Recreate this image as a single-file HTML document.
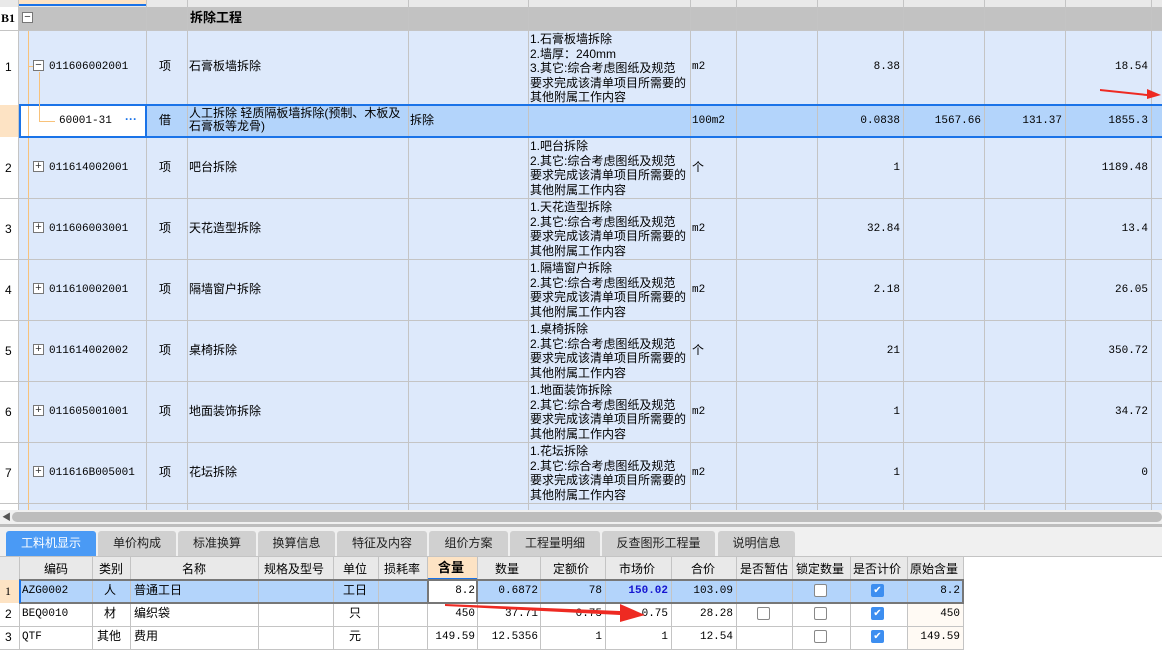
<!DOCTYPE html>
<html><head><meta charset="utf-8"><style>
*{margin:0;padding:0;box-sizing:border-box}
body{width:1162px;height:651px;overflow:hidden;background:#fff;font-family:"Liberation Sans","Noto Sans CJK SC",sans-serif;font-size:12px;color:#000;position:relative}
.a{position:absolute}
.c{position:absolute;white-space:nowrap;line-height:14px}
.m{font-family:"Liberation Mono","Noto Sans CJK SC",monospace;font-size:11px}
.vl{position:absolute;width:1px;background:#c4c4c4}
.hl{position:absolute;height:1px;background:#c4c4c4}
.box{position:absolute;width:11px;height:11px;border:1px solid #777;background:#fff;font-size:11px;line-height:8px;text-align:center;color:#333}
.tab{position:absolute;top:531px;height:25px;background:#d0d0d0;border-radius:3px 3px 0 0;text-align:center;line-height:25px;font-size:12px;color:#222}
.cb{position:absolute;width:13px;height:13px;border:1px solid #888;border-radius:2px;background:#fff}
.ck{position:absolute;width:13px;height:13px;border-radius:2px;background:#3d8ef0;color:#fff;font-size:10px;line-height:13px;text-align:center}
</style></head><body>
<div class="a" style="left:0;top:0;width:1162px;height:7px;background:#e9e9e9"></div>
<div class="a" style="left:19px;top:0;width:127px;height:6px;background:#fde3c4;border-bottom:2px solid #1a73e8"></div>
<div class="a" style="left:0;top:7px;width:1162px;height:23px;background:#c2c2c2"></div>
<div class="a" style="left:0;top:7px;width:18px;height:23px;background:#fff"></div>
<div class="c" style="left:1px;top:11px;font-weight:bold;font-family:'Liberation Serif',serif">B1</div>
<div class="box" style="left:22px;top:12px">−</div>
<div class="c" style="left:190px;top:11px;font-weight:bold;font-size:13px">拆除工程</div>
<div class="a" style="left:19px;top:30px;width:1143px;height:480px;background:#dde9fb"></div>
<div class="a" style="left:0;top:30px;width:18px;height:480px;background:#fff"></div>
<div class="a" style="left:0;top:105px;width:19px;height:32px;background:#fde3c4"></div>
<div class="a" style="left:19px;top:105px;width:1143px;height:32px;background:#b3d4fb"></div>
<div class="a" style="left:19px;top:105px;width:127px;height:32px;background:#fff"></div>
<div class="vl" style="left:18px;top:0;height:510px"></div>
<div class="vl" style="left:146px;top:0;height:510px"></div>
<div class="vl" style="left:187px;top:0;height:510px"></div>
<div class="vl" style="left:408px;top:0;height:510px"></div>
<div class="vl" style="left:528px;top:0;height:510px"></div>
<div class="vl" style="left:690px;top:0;height:510px"></div>
<div class="vl" style="left:736px;top:0;height:510px"></div>
<div class="vl" style="left:817px;top:0;height:510px"></div>
<div class="vl" style="left:903px;top:0;height:510px"></div>
<div class="vl" style="left:984px;top:0;height:510px"></div>
<div class="vl" style="left:1065px;top:0;height:510px"></div>
<div class="vl" style="left:1151px;top:0;height:510px"></div>
<div class="a" style="left:28px;top:30px;width:1px;height:480px;background:#f8c27a"></div>
<div class="hl" style="left:0;top:30px;width:1162px"></div>
<div class="hl" style="left:0;top:198px;width:1162px"></div>
<div class="hl" style="left:0;top:259px;width:1162px"></div>
<div class="hl" style="left:0;top:320px;width:1162px"></div>
<div class="hl" style="left:0;top:381px;width:1162px"></div>
<div class="hl" style="left:0;top:442px;width:1162px"></div>
<div class="hl" style="left:0;top:503px;width:1162px"></div>
<div class="a" style="left:19px;top:104px;width:1143px;height:34px;border:2px solid #1a73e8;border-right:none"></div>
<div class="a" style="left:145px;top:104px;width:2px;height:34px;background:#1a73e8"></div>
<div class="c" style="left:5px;top:60px">1</div>
<div class="a" style="left:29px;top:66px;width:6px;height:1px;background:#f8c27a"></div>
<div class="box" style="left:33px;top:60px">−</div>
<div class="c m" style="left:49px;top:60px">011606002001</div>
<div class="c" style="left:159px;top:59px">项</div>
<div class="c" style="left:189px;top:59px">石膏板墙拆除</div>
<div class="c" style="left:530px;top:32px;line-height:14.5px">1.石膏板墙拆除<br>2.墙厚：240mm<br>3.其它:综合考虑图纸及规范<br>要求完成该清单项目所需要的<br>其他附属工作内容</div>
<div class="c m" style="left:692px;top:60px">m2</div>
<div class="c m" style="left:850px;top:60px;width:50px;text-align:right">8.38</div>
<div class="c m" style="left:1090px;top:60px;width:58px;text-align:right">18.54</div>
<div class="a" style="left:39px;top:72px;width:1px;height:50px;background:#f8c27a"></div>
<div class="a" style="left:39px;top:121px;width:16px;height:1px;background:#f8c27a"></div>
<div class="c m" style="left:59px;top:114px">60001-31</div>
<div class="c" style="left:125px;top:112px;color:#1a73e8;font-weight:bold">···</div>
<div class="c" style="left:159px;top:113px">借</div>
<div class="c" style="left:189px;top:107px;line-height:13px">人工拆除 轻质隔板墙拆除(预制、木板及<br>石膏板等龙骨)</div>
<div class="c" style="left:410px;top:113px">拆除</div>
<div class="c m" style="left:692px;top:114px">100m2</div>
<div class="c m" style="left:840px;top:114px;width:60px;text-align:right">0.0838</div>
<div class="c m" style="left:920px;top:114px;width:61px;text-align:right">1567.66</div>
<div class="c m" style="left:1000px;top:114px;width:62px;text-align:right">131.37</div>
<div class="c m" style="left:1080px;top:114px;width:68px;text-align:right">1855.3</div>
<div class="c" style="left:5px;top:161px">2</div><div class="box" style="left:33px;top:161px">+</div><div class="c m" style="left:49px;top:161px">011614002001</div><div class="c" style="left:159px;top:160px">项</div><div class="c" style="left:189px;top:160px">吧台拆除</div>
<div class="c" style="left:530px;top:139px;line-height:14.5px">1.吧台拆除<br>2.其它:综合考虑图纸及规范<br>要求完成该清单项目所需要的<br>其他附属工作内容</div><div class="c" style="left:692px;top:160px">个</div><div class="c m" style="left:850px;top:161px;width:50px;text-align:right">1</div><div class="c m" style="left:1080px;top:161px;width:68px;text-align:right">1189.48</div>
<div class="c" style="left:5px;top:222px">3</div><div class="box" style="left:33px;top:222px">+</div><div class="c m" style="left:49px;top:222px">011606003001</div><div class="c" style="left:159px;top:221px">项</div><div class="c" style="left:189px;top:221px">天花造型拆除</div>
<div class="c" style="left:530px;top:200px;line-height:14.5px">1.天花造型拆除<br>2.其它:综合考虑图纸及规范<br>要求完成该清单项目所需要的<br>其他附属工作内容</div><div class="c m" style="left:692px;top:222px">m2</div><div class="c m" style="left:850px;top:222px;width:50px;text-align:right">32.84</div><div class="c m" style="left:1080px;top:222px;width:68px;text-align:right">13.4</div>
<div class="c" style="left:5px;top:283px">4</div><div class="box" style="left:33px;top:283px">+</div><div class="c m" style="left:49px;top:283px">011610002001</div><div class="c" style="left:159px;top:282px">项</div><div class="c" style="left:189px;top:282px">隔墙窗户拆除</div>
<div class="c" style="left:530px;top:261px;line-height:14.5px">1.隔墙窗户拆除<br>2.其它:综合考虑图纸及规范<br>要求完成该清单项目所需要的<br>其他附属工作内容</div><div class="c m" style="left:692px;top:283px">m2</div><div class="c m" style="left:850px;top:283px;width:50px;text-align:right">2.18</div><div class="c m" style="left:1080px;top:283px;width:68px;text-align:right">26.05</div>
<div class="c" style="left:5px;top:344px">5</div><div class="box" style="left:33px;top:344px">+</div><div class="c m" style="left:49px;top:344px">011614002002</div><div class="c" style="left:159px;top:343px">项</div><div class="c" style="left:189px;top:343px">桌椅拆除</div>
<div class="c" style="left:530px;top:322px;line-height:14.5px">1.桌椅拆除<br>2.其它:综合考虑图纸及规范<br>要求完成该清单项目所需要的<br>其他附属工作内容</div><div class="c" style="left:692px;top:343px">个</div><div class="c m" style="left:850px;top:344px;width:50px;text-align:right">21</div><div class="c m" style="left:1080px;top:344px;width:68px;text-align:right">350.72</div>
<div class="c" style="left:5px;top:405px">6</div><div class="box" style="left:33px;top:405px">+</div><div class="c m" style="left:49px;top:405px">011605001001</div><div class="c" style="left:159px;top:404px">项</div><div class="c" style="left:189px;top:404px">地面装饰拆除</div>
<div class="c" style="left:530px;top:383px;line-height:14.5px">1.地面装饰拆除<br>2.其它:综合考虑图纸及规范<br>要求完成该清单项目所需要的<br>其他附属工作内容</div><div class="c m" style="left:692px;top:405px">m2</div><div class="c m" style="left:850px;top:405px;width:50px;text-align:right">1</div><div class="c m" style="left:1080px;top:405px;width:68px;text-align:right">34.72</div>
<div class="c" style="left:5px;top:466px">7</div><div class="box" style="left:33px;top:466px">+</div><div class="c m" style="left:49px;top:466px">011616B005001</div><div class="c" style="left:159px;top:465px">项</div><div class="c" style="left:189px;top:465px">花坛拆除</div>
<div class="c" style="left:530px;top:444px;line-height:14.5px">1.花坛拆除<br>2.其它:综合考虑图纸及规范<br>要求完成该清单项目所需要的<br>其他附属工作内容</div><div class="c m" style="left:692px;top:466px">m2</div><div class="c m" style="left:850px;top:466px;width:50px;text-align:right">1</div><div class="c m" style="left:1080px;top:466px;width:68px;text-align:right">0</div>
<svg class="a" style="left:1095px;top:85px" width="67" height="16"><polygon points="5,4 52,9 52,4 66,10 52,14 52,11 5,6" fill="#ee2a22"/></svg>
<div class="a" style="left:0;top:510px;width:1162px;height:14px;background:#f0f0f0"></div>
<div class="a" style="left:12px;top:512px;width:1150px;height:10px;background:#bdbdbd;border-radius:5px"></div>
<div class="c" style="left:2px;top:510px;font-size:9px;color:#555">◀</div>
<div class="a" style="left:0;top:524px;width:1162px;height:3px;background:#bdbdbd"></div>
<div class="a" style="left:0;top:527px;width:1162px;height:30px;background:#f0f0f0"></div>
<div class="tab" style="left:6px;width:90px;background:#4a9af5;color:#fff">工料机显示</div>
<div class="tab" style="left:98px;width:78px">单价构成</div>
<div class="tab" style="left:178px;width:78px">标准换算</div>
<div class="tab" style="left:258px;width:77px">换算信息</div>
<div class="tab" style="left:337px;width:90px">特征及内容</div>
<div class="tab" style="left:429px;width:79px">组价方案</div>
<div class="tab" style="left:510px;width:90px">工程量明细</div>
<div class="tab" style="left:602px;width:113px">反查图形工程量</div>
<div class="tab" style="left:718px;width:77px">说明信息</div>
<div class="a" style="left:0;top:556px;width:1162px;height:1px;background:#c4c4c4"></div>
<div class="a" style="left:0;top:557px;width:963px;height:23px;background:#e9e9e9"></div>
<div class="a" style="left:427px;top:557px;width:50px;height:23px;background:#fde3c4;border-bottom:2px solid #1a73e8"></div>
<div class="a" style="left:0;top:580px;width:19px;height:23px;background:#fde3c4"></div>
<div class="a" style="left:19px;top:580px;width:944px;height:23px;background:#b3d4fb"></div>
<div class="a" style="left:907px;top:603px;width:56px;height:46px;background:#fffaf4"></div>
<div class="a" style="left:428px;top:581px;width:49px;height:21px;background:#fff"></div>
<div class="vl" style="left:19px;top:557px;height:92px"></div>
<div class="vl" style="left:92px;top:557px;height:92px"></div>
<div class="vl" style="left:130px;top:557px;height:92px"></div>
<div class="vl" style="left:258px;top:557px;height:92px"></div>
<div class="vl" style="left:333px;top:557px;height:92px"></div>
<div class="vl" style="left:378px;top:557px;height:92px"></div>
<div class="vl" style="left:427px;top:557px;height:92px"></div>
<div class="vl" style="left:477px;top:557px;height:92px"></div>
<div class="vl" style="left:540px;top:557px;height:92px"></div>
<div class="vl" style="left:605px;top:557px;height:92px"></div>
<div class="vl" style="left:671px;top:557px;height:92px"></div>
<div class="vl" style="left:736px;top:557px;height:92px"></div>
<div class="vl" style="left:792px;top:557px;height:92px"></div>
<div class="vl" style="left:850px;top:557px;height:92px"></div>
<div class="vl" style="left:907px;top:557px;height:92px"></div>
<div class="vl" style="left:963px;top:557px;height:92px"></div>
<div class="hl" style="left:0;top:626px;width:964px"></div>
<div class="hl" style="left:0;top:649px;width:964px"></div>
<div class="a" style="left:19px;top:579px;width:945px;height:25px;border:2px solid #777"></div>
<div class="a" style="left:427px;top:579px;width:51px;height:25px;border:2px solid #777"></div>
<div class="a" style="left:19px;top:580px;width:2px;height:23px;background:#1a73e8"></div>
<div class="c" style="left:44px;top:562px">编码</div>
<div class="c" style="left:99px;top:562px">类别</div>
<div class="c" style="left:182px;top:562px">名称</div>
<div class="c" style="left:264px;top:562px">规格及型号</div>
<div class="c" style="left:343px;top:562px">单位</div>
<div class="c" style="left:384px;top:562px">损耗率</div>
<div class="c" style="left:438px;top:561px;font-weight:bold;font-size:13px">含量</div>
<div class="c" style="left:495px;top:562px">数量</div>
<div class="c" style="left:553px;top:562px">定额价</div>
<div class="c" style="left:619px;top:562px">市场价</div>
<div class="c" style="left:691px;top:562px">合价</div>
<div class="c" style="left:740px;top:562px">是否暂估</div>
<div class="c" style="left:796px;top:562px">锁定数量</div>
<div class="c" style="left:853px;top:562px">是否计价</div>
<div class="c" style="left:910px;top:562px">原始含量</div>
<div class="c" style="left:5px;top:584px;font-family:'Liberation Serif',serif">1</div>
<div class="c m" style="left:22px;top:584px">AZG0002</div><div class="c" style="left:104px;top:583px">人</div><div class="c" style="left:134px;top:583px">普通工日</div><div class="c" style="left:343px;top:583px">工日</div>
<div class="c m" style="left:430px;top:584px;width:45px;text-align:right">8.2</div><div class="c m" style="left:480px;top:584px;width:58px;text-align:right">0.6872</div><div class="c m" style="left:545px;top:584px;width:57px;text-align:right">78</div><div class="c m" style="left:610px;top:584px;width:58px;text-align:right;color:#1515d0;font-weight:bold">150.02</div><div class="c m" style="left:675px;top:584px;width:58px;text-align:right">103.09</div>
<div class="cb" style="left:814px;top:584px"></div><div class="ck" style="left:871px;top:584px">✔</div><div class="c m" style="left:910px;top:584px;width:50px;text-align:right">8.2</div>
<div class="c" style="left:5px;top:607px">2</div>
<div class="c m" style="left:22px;top:607px">BEQ0010</div><div class="c" style="left:104px;top:606px">材</div><div class="c" style="left:134px;top:606px">编织袋</div><div class="c" style="left:349px;top:606px">只</div>
<div class="c m" style="left:430px;top:607px;width:45px;text-align:right">450</div><div class="c m" style="left:480px;top:607px;width:58px;text-align:right">37.71</div><div class="c m" style="left:545px;top:607px;width:57px;text-align:right">0.75</div><div class="c m" style="left:610px;top:607px;width:58px;text-align:right">0.75</div><div class="c m" style="left:675px;top:607px;width:58px;text-align:right">28.28</div>
<div class="cb" style="left:757px;top:607px"></div><div class="cb" style="left:814px;top:607px"></div><div class="ck" style="left:871px;top:607px">✔</div><div class="c m" style="left:910px;top:607px;width:50px;text-align:right">450</div>
<div class="c" style="left:5px;top:630px">3</div>
<div class="c m" style="left:22px;top:630px">QTF</div><div class="c" style="left:97px;top:629px">其他</div><div class="c" style="left:134px;top:629px">费用</div><div class="c" style="left:349px;top:629px">元</div>
<div class="c m" style="left:430px;top:630px;width:45px;text-align:right">149.59</div><div class="c m" style="left:480px;top:630px;width:58px;text-align:right">12.5356</div><div class="c m" style="left:545px;top:630px;width:57px;text-align:right">1</div><div class="c m" style="left:610px;top:630px;width:58px;text-align:right">1</div><div class="c m" style="left:675px;top:630px;width:58px;text-align:right">12.54</div>
<div class="cb" style="left:814px;top:630px"></div><div class="ck" style="left:871px;top:630px">✔</div><div class="c m" style="left:910px;top:630px;width:50px;text-align:right">149.59</div>
<svg class="a" style="left:440px;top:598px" width="210" height="26"><polygon points="5,6 180,13 180,6 205,17 180,24 180,17 5,8" fill="#ee2a22"/></svg>
</body></html>
